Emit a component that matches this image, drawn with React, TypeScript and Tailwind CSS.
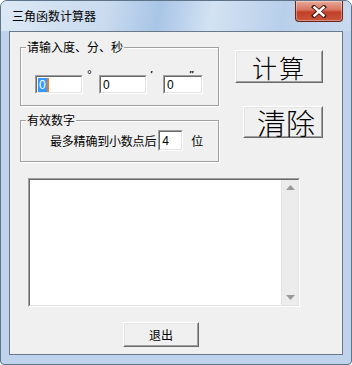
import React from "react";

const cjk = "font-['Noto_Sans_CJK_SC','Noto_Sans_CJK_JP',sans-serif]";
const latin = "font-['Liberation_Sans','Noto_Sans_CJK_SC',sans-serif]";

function Sunken({ className, children }: { className?: string; children?: React.ReactNode }) {
  return (
    <div className={`border border-t-[#a0a0a0] border-l-[#a0a0a0] border-b-white border-r-white ${className ?? ""}`}>
      <div className="h-full w-full border border-t-[#696969] border-l-[#696969] border-b-[#e3e3e3] border-r-[#e3e3e3] bg-white flex items-center">
        {children}
      </div>
    </div>
  );
}

function Raised({ className, children }: { className?: string; children?: React.ReactNode }) {
  return (
    <div className={`border border-t-white border-l-white border-b-[#696969] border-r-[#696969] ${className ?? ""}`}>
      <div className="h-full w-full border border-t-[#e3e3e3] border-l-[#e3e3e3] border-b-[#a0a0a0] border-r-[#a0a0a0] bg-[#f0f0f0] flex items-center justify-center">
        {children}
      </div>
    </div>
  );
}

function Group({ title, className, children }: { title: string; className?: string; children?: React.ReactNode }) {
  return (
    <div className={`relative border border-[#a0a0a0] shadow-[inset_1px_1px_0_#fff,1px_1px_0_#fff] ${className ?? ""}`}>
      <span className={`absolute left-[5px] top-[-9px] bg-[#f0f0f0] px-[1px] text-[12px] leading-[16px] text-black ${cjk}`}>{title}</span>
      {children}
    </div>
  );
}

export default function App() {
  return (
    <div className="w-[352px] h-[365px] bg-[#bfd4ec] border border-[#5f7389] rounded-t-[7px] rounded-b-[4px] flex flex-col overflow-hidden">
      {/* title bar */}
      <div className="h-[30px] flex items-start justify-between bg-[linear-gradient(100deg,#dce8f5_0%,#c9dbef_30%,#a9c5e6_45%,#d3e2f3_60%,#b8cfea_80%,#c8daef_100%)]">
        <span className={`pl-[11px] pt-[6px] text-[12px] leading-[18px] text-black ${cjk}`}>三角函数计算器</span>
        <div className="mr-[8px] w-[48px] h-[21px] rounded-b-[4px] border border-t-0 border-[#6b2418] bg-[linear-gradient(180deg,#e9a99a_0%,#d7735f_45%,#c13f27_55%,#c9553c_100%)] flex items-center justify-center shadow-[inset_0_0_0_1px_rgba(255,255,255,0.35)]">
          <svg width="16" height="13" viewBox="0 0 16 13">
            <path d="M3 2 L13 11 M13 2 L3 11" stroke="#4a1a12" strokeWidth="4.2" strokeLinecap="square" />
            <path d="M3.5 2.5 L12.5 10.5 M12.5 2.5 L3.5 10.5" stroke="#fff" strokeWidth="2.4" strokeLinecap="square" />
          </svg>
        </div>
      </div>

      {/* client area */}
      <div className="mx-[8px] mb-[9px] flex-1 border border-[#69798c] bg-[#f0f0f0] flex flex-col">
        <div className="flex">
          <div className="pl-[10px] flex flex-col">
            <Group title="请输入度、分、秒" className="mt-[15px] w-[199px] h-[59px]">
              <div className="flex pl-[14px] pt-[27px] gap-[16px]">
                <Sunken className="w-[48px] h-[19px]">
                  <span className={`ml-[1px] h-[14px] flex items-center bg-[#3399ff] text-white text-[12px] leading-[14px] px-[1px] ${latin}`}>0</span>
                  <span className="w-[2px] h-[14px] bg-[#e67e22]" />
                </Sunken>
                <Sunken className="w-[48px] h-[19px]">
                  <span className={`ml-[2px] text-[12px] leading-[14px] text-black ${latin}`}>0</span>
                </Sunken>
                <Sunken className="w-[40px] h-[19px]">
                  <span className={`ml-[2px] text-[12px] leading-[14px] text-black ${latin}`}>0</span>
                </Sunken>
              </div>
              <span className={`absolute left-[66px] top-[21px] text-[12px] leading-[12px] text-black ${latin}`}>°</span>
              <span className={`absolute left-[129px] top-[22px] text-[9px] leading-[9px] font-bold italic text-black ${latin}`}>′</span>
              <span className={`absolute left-[168px] top-[22px] text-[9px] leading-[9px] font-bold italic text-black ${latin}`}>″</span>
            </Group>
            <Group title="有效数字" className="mt-[14px] w-[199px] h-[42px]">
              <div className="flex items-center pl-[29px] pt-[9px]">
                <span className={`text-[12px] leading-[14px] text-black tracking-[-0.2px] ${cjk}`}>最多精确到小数点后</span>
                <Sunken className="ml-[2px] w-[25px] h-[21px]">
                  <span className={`ml-[2px] text-[12px] leading-[14px] text-black ${latin}`}>4</span>
                </Sunken>
                <span className={`ml-[8px] text-[12px] leading-[14px] text-black ${cjk}`}>位</span>
              </div>
            </Group>
          </div>
          <div className="flex-1 flex flex-col items-end pr-[19px]">
            <Raised className="mt-[18px] w-[88px] h-[33px]">
              <span className={`text-[25px] leading-[28px] font-light text-black tracking-[2px] ${cjk}`}>计算</span>
            </Raised>
            <Raised className="mt-[23px] w-[80px] h-[32px]">
              <span className={`pl-[6px] text-[29px] leading-[30px] font-light text-black ${cjk}`}>清除</span>
            </Raised>
          </div>
        </div>

        {/* output box */}
        <div className="ml-[18px] mt-[16px] w-[272px] h-[129px] border border-t-[#a0a0a0] border-l-[#a0a0a0] border-b-white border-r-white">
          <div className="h-full w-full border border-t-[#696969] border-l-[#696969] border-b-[#e3e3e3] border-r-[#e3e3e3] bg-white flex justify-end">
            <div className="w-[17px] h-full bg-[#ececec] border-l border-[#e3e3e3] flex flex-col items-center justify-between py-[5px]">
              <svg width="9" height="5" viewBox="0 0 9 5"><path d="M0 5 L4.5 0 L9 5 Z" fill="#9a9a9a" /></svg>
              <svg width="9" height="5" viewBox="0 0 9 5"><path d="M0 0 L9 0 L4.5 5 Z" fill="#9a9a9a" /></svg>
            </div>
          </div>
        </div>

        {/* exit */}
        <Raised className="ml-[113px] mt-[15px] w-[76px] h-[25px]">
          <span className={`text-[12px] leading-[14px] text-black ${cjk}`}>退出</span>
        </Raised>
      </div>
    </div>
  );
}
